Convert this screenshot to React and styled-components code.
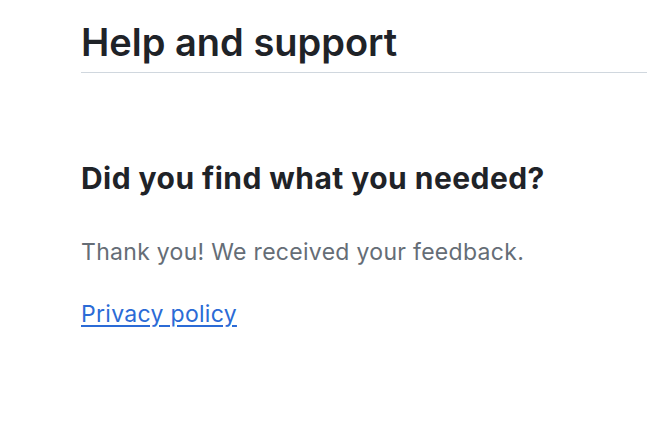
import React from "react";
import styled, { createGlobalStyle } from "styled-components";

const Global = createGlobalStyle`
  html, body { margin: 0; padding: 0; background: #ffffff; }
  body { font-family: Inter, "Liberation Sans", sans-serif; -webkit-font-smoothing: antialiased; }
`;

const Page = styled.main`
  padding: 18px 0 0 81px;
  width: 647px;
  box-sizing: border-box;
`;

const Header = styled.header`
  border-bottom: 1px solid #d0d7de;
  padding-bottom: 6px;
`;

const Title = styled.h2`
  margin: 0;
  font-size: 38px;
  line-height: 48px;
  font-weight: 600;
  color: #1f2328;
`;

const Section = styled.section`
  padding-top: 87px;
`;

const Question = styled.h3`
  margin: 0;
  font-size: 30px;
  line-height: 36px;
  font-weight: 700;
  letter-spacing: 0.45px;
  color: #1f2328;
`;

const Note = styled.p`
  margin: 40px 0 0;
  font-size: 23px;
  line-height: 32px;
  letter-spacing: 0.3px;
  color: #656d76;
`;

const Link = styled.a`
  display: inline-block;
  margin-top: 30px;
  font-size: 23px;
  line-height: 32px;
  letter-spacing: 0.3px;
  color: #2b6bd6;
  text-decoration: underline;
  text-underline-offset: 3px;
`;

export default function App() {
  return (
    <>
      <Global />
      <Page>
        <Header>
          <Title>Help and support</Title>
        </Header>
        <Section>
          <Question>Did you find what you needed?</Question>
          <Note>Thank you! We received your feedback.</Note>
          <Link href="#">Privacy policy</Link>
        </Section>
      </Page>
    </>
  );
}
